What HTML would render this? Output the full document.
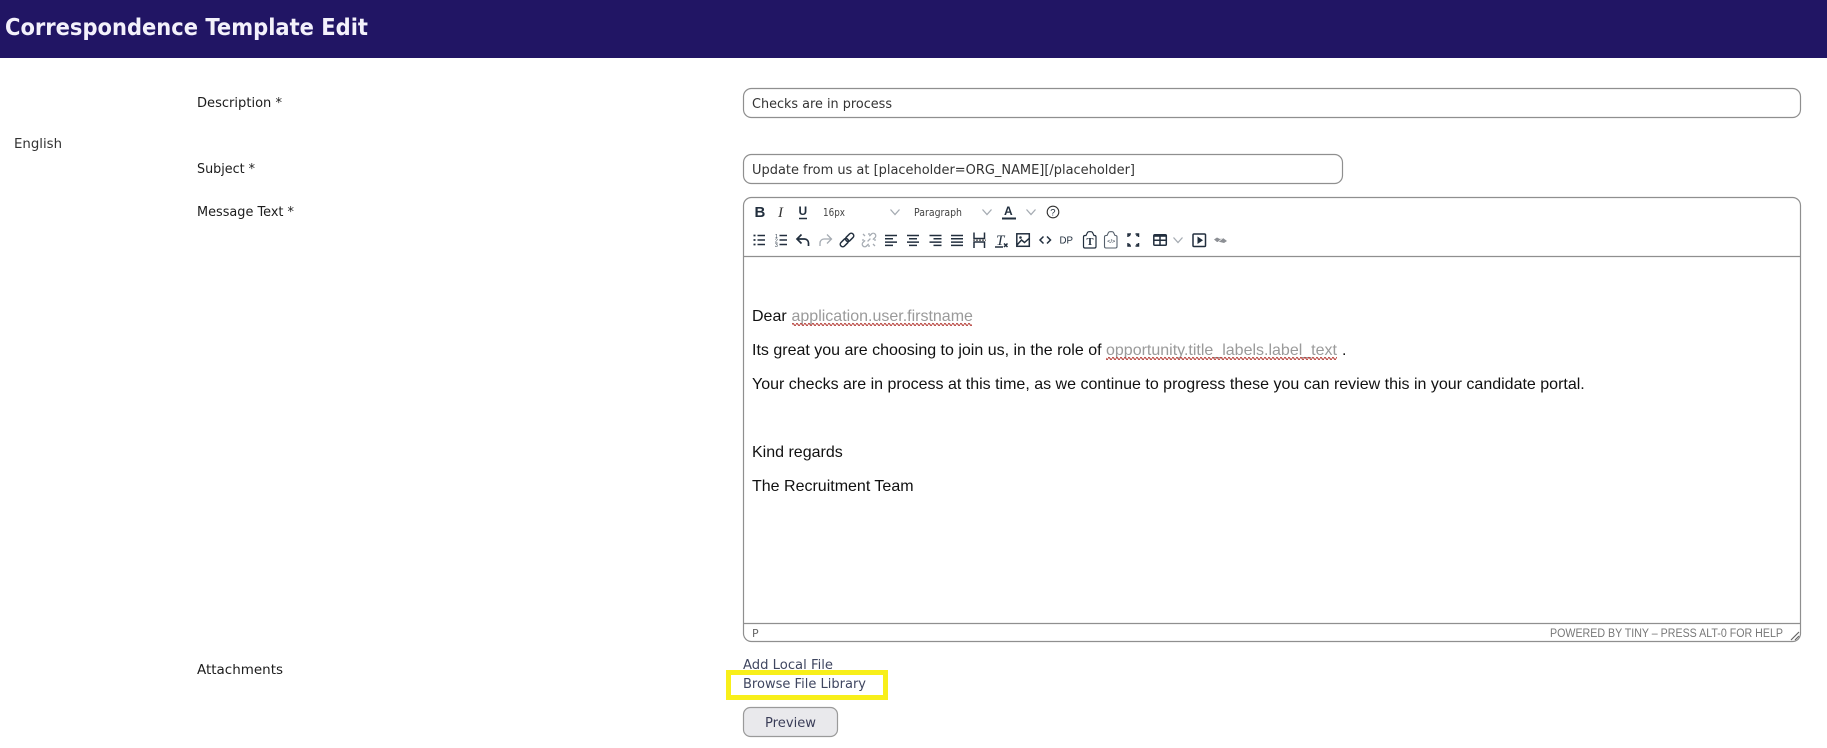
<!DOCTYPE html>
<html><head><meta charset="utf-8"><title>Correspondence Template Edit</title>
<style>
html,body{margin:0;padding:0;background:#fff;width:1827px;height:748px;overflow:hidden}
svg{display:block}
.m{font-family:"DejaVu Sans",sans-serif}
.a{font-family:"Liberation Sans",Arial,sans-serif;font-size:16px;fill:#111}
.g{fill:#9a9a9a}
.i{fill:none;stroke:#222f3e;stroke-width:1.5}
.l{fill:none;stroke:#a5abb2;stroke-width:1.3}
</style></head><body>
<svg width="1827" height="748" viewBox="0 0 1827 748" xmlns="http://www.w3.org/2000/svg">
<defs>
<pattern id="w" width="4" height="4" patternUnits="userSpaceOnUse" x="0" y="322"><path d="M0 1.500 Q1 -.5 2 1.500 T4 1.500" transform="translate(0 1)" fill="none" stroke="#b8453f" stroke-width="1.200"/></pattern>
<pattern id="w2" width="4" height="4" patternUnits="userSpaceOnUse" x="0" y="356"><path d="M0 1.500 Q1 -.5 2 1.500 T4 1.500" transform="translate(0 1)" fill="none" stroke="#b8453f" stroke-width="1.200"/></pattern>
</defs>
<rect width="1827" height="58" fill="#211564"/>
<text class="m" x="5" y="35" font-size="23" font-weight="700" fill="#f3f1fb" textLength="363" lengthAdjust="spacingAndGlyphs">Correspondence Template Edit</text>

<rect x="743.500" y="88.500" width="1057" height="29" rx="8" fill="#fff" stroke="#8f8f8f" stroke-width="1.200"/>
<rect x="743.500" y="154.500" width="599" height="29" rx="8" fill="#fff" stroke="#8f8f8f" stroke-width="1.200"/>
<rect x="743.500" y="197.500" width="1057" height="444" rx="8" fill="#fff" stroke="#8f8f8f" stroke-width="1.200"/>
<path d="M743.500 256.500H1800.500M743.500 623.500H1800.500" stroke="#8f8f8f" stroke-width="1.200"/>

<g class="m" font-size="13" fill="#1c1c1c">
<text x="197" y="107" textLength="85" lengthAdjust="spacingAndGlyphs">Description *</text>
<text x="14" y="148" textLength="48" lengthAdjust="spacingAndGlyphs" fill="#333">English</text>
<text x="197" y="173" textLength="58" lengthAdjust="spacingAndGlyphs">Subject *</text>
<text x="197" y="216" textLength="97" lengthAdjust="spacingAndGlyphs">Message Text *</text>
<text x="197" y="674" textLength="86" lengthAdjust="spacingAndGlyphs">Attachments</text>
<text x="752" y="108" textLength="140" lengthAdjust="spacingAndGlyphs" fill="#333">Checks are in process</text>
<text x="752" y="174" textLength="383" lengthAdjust="spacingAndGlyphs" fill="#333">Update from us at [placeholder=ORG_NAME][/placeholder]</text>
</g>

<!-- toolbar row 1 -->
<text x="754.500" y="217" font-family="Liberation Sans,sans-serif" font-weight="700" font-size="15" fill="#222f3e">B</text>
<text x="778" y="217" font-family="Liberation Serif,serif" font-style="italic" font-size="15" fill="#333">I</text>
<text x="798.500" y="215" font-family="Liberation Sans,sans-serif" font-size="12" font-weight="700" fill="#222f3e">U</text>
<path d="M799 218.500H807" class="i"/>
<text class="m" x="823" y="216" font-size="11" fill="#444" textLength="22" lengthAdjust="spacingAndGlyphs">16px</text>
<path d="M890.500 209.500l4.500 5 4.500-5" class="l"/>
<text class="m" x="914" y="216" font-size="11" fill="#444" textLength="48" lengthAdjust="spacingAndGlyphs">Paragraph</text>
<path d="M982.500 209.500l4.500 5 4.500-5" class="l"/>
<text x="1004" y="215" font-family="Liberation Sans,sans-serif" font-weight="700" font-size="12" fill="#222f3e">A</text>
<path d="M1002 218.500H1016" stroke="#222f3e" stroke-width="2"/>
<path d="M1026.500 209.500l4.500 5 4.500-5" class="l"/>
<circle cx="1053" cy="212" r="5.800" fill="none" stroke="#333" stroke-width="1.100"/>
<text x="1050.300" y="215.500" font-family="Liberation Sans,sans-serif" font-size="9.500" fill="#222f3e">?</text>

<!-- toolbar row 2 -->
<path d="M757.500 235.500H765M757.500 240H765M757.500 244.500H765" class="i"/>
<path d="M753.500 235.500h2M753.500 240h2M753.500 244.500h2" stroke="#222f3e" stroke-width="1.800" fill="none"/>
<path d="M779.500 235.500H787M779.500 240H787M779.500 244.500H787" class="i"/>
<text x="775" y="238" font-family="Liberation Sans,sans-serif" font-size="5" fill="#222f3e">1</text>
<text x="775" y="242.500" font-family="Liberation Sans,sans-serif" font-size="5" fill="#222f3e">2</text>
<text x="775" y="247" font-family="Liberation Sans,sans-serif" font-size="5" fill="#222f3e">3</text>
<path d="M801.500 234.500L797 239l4.500 4.500M797 239h7.500a4 4 0 0 1 4 4v3" fill="none" stroke="#222f3e" stroke-width="1.700"/>
<path d="M827 234.500l4.500 4.500-4.500 4.500M831.500 239H824a4 4 0 0 0-4 4v3" class="l"/>
<g class="i" transform="rotate(-45 847 240)"><rect x="838.500" y="237.500" width="9.500" height="5" rx="2.500"/><rect x="846" y="237.500" width="9.500" height="5" rx="2.500"/></g>
<g class="l" transform="rotate(-45 869 240)"><path d="M866 237.500h-3a2.500 2.500 0 0 0 0 5h3M872 237.500h3a2.500 2.500 0 0 1 0 5h-3M867 240h4"/></g>
<path d="M863 234l2 2M875 246l-2-2M862 240h2M874 240h2M869 233v2M869 245v2" class="l" stroke-width="1"/>
<path d="M885 235.500H897M885 238.800H893M885 242.100H897M885 245.400H893" class="i" stroke-width="1.600"/>
<path d="M907 235.500H919M909 238.800H917M907 242.100H919M909 245.400H917" class="i" stroke-width="1.600"/>
<path d="M929.500 235.500H941.500M933.500 238.800H941.500M929.500 242.100H941.500M933.500 245.400H941.500" class="i" stroke-width="1.600"/>
<path d="M951 235.500H963M951 238.800H963M951 242.100H963M951 245.400H963" class="i" stroke-width="1.600"/>
<path d="M974 232.500v6h10.500v-6M974 248v-6h10.500v6" class="i"/>
<path d="M973 240.200H986" stroke="#777" stroke-width="1.500" stroke-dasharray="2 1"/>
<text x="996" y="245" font-family="Liberation Serif,serif" font-style="italic" font-size="15" fill="#222f3e">T</text>
<path d="M995 247H1003" class="i" stroke-width="1.200"/>
<path d="M1004 243.500l3.500 3.500M1007.500 243.500l-3.500 3.500" class="i" stroke-width="1.200"/>
<rect x="1016.800" y="233.800" width="12.500" height="12.500" class="i" stroke-width="1.700"/>
<path d="M1017 245l4.500-5 3 2.500 4.500-4" class="i" stroke-width="1.300"/>
<circle cx="1020.500" cy="237.500" r="1.300" fill="#222f3e"/>
<path d="M1043.500 236.500l-3.500 3.500 3.500 3.500M1047 236.500l3.500 3.500-3.500 3.500" class="i"/>
<text x="1059.500" y="243.500" font-family="Liberation Sans,sans-serif" font-size="10.500" fill="#222f3e" textLength="13.500" lengthAdjust="spacingAndGlyphs">DP</text>
<path d="M1086 235.500l1.500-3q.5-.8 1.500-.8h2q1 0 1.500.8l1.500 3h.5q1.500 0 1.500 1.500v9.500q0 1.500-1.500 1.500h-9.500q-1.500 0-1.500-1.500v-9.500q0-1.500 1.500-1.500z" fill="none" stroke="#222f3e" stroke-width="1.200"/>
<text x="1086.500" y="245" font-family="Liberation Serif,serif" font-size="10.500" font-weight="700" fill="#222f3e">T</text>
<path d="M1107 235.500l1.500-3q.5-.8 1.500-.8h2q1 0 1.500.8l1.500 3h.5q1.500 0 1.500 1.500v9.500q0 1.500-1.500 1.500h-9.500q-1.500 0-1.500-1.500v-9.500q0-1.500 1.500-1.500z" fill="none" stroke="#555f6b" stroke-width="1.100"/>
<text x="1107.300" y="243" font-family="Liberation Sans,sans-serif" font-size="5.500" fill="#222f3e">&lt;/&gt;</text>
<path d="M1128 237v-3h3M1138.500 237v-3h-3M1128 243v3h3M1138.500 243v3h-3" class="i" stroke-width="1.400"/>
<path d="M1130 236l-1.500-1.500M1136.500 236l1.500-1.500M1130 244l-1.500 1.500M1136.500 244l1.500 1.500" class="i" stroke-width="1"/>
<rect x="1153.800" y="234.800" width="12.500" height="10.500" rx="1" class="i" stroke-width="1.500"/>
<path d="M1154 235.800H1166" stroke="#222f3e" stroke-width="2"/>
<path d="M1153.800 240.300H1166.300M1160 235V245" class="i" stroke-width="1.400"/>
<path d="M1173.500 237.500l4.500 5 4.500-5" class="l"/>
<rect x="1193" y="234" width="12.500" height="12.500" rx="1" class="i" stroke-width="1.700"/>
<path d="M1197.500 236.500v7.500l5.500-3.700z" fill="#222f3e"/>
<path d="M1214 239.500l3-2 3 1.500 3-1 4 3-3 2-4-1-3 0z" fill="#8c8f94"/>
<path d="M1217 243l7-6" stroke="#fff" stroke-width=".8"/>

<!-- editor body -->
<text class="a" x="752" y="321">Dear</text>
<text class="a g" x="791.500" y="321">application.user.firstname</text>
<rect x="792" y="322" width="180" height="4" fill="url(#w)"/>
<text class="a" x="752" y="355">Its great you are choosing to join us, in the role of</text>
<text class="a g" x="1106" y="355">opportunity.title_labels.label_text</text>
<rect x="1106" y="356" width="231" height="4" fill="url(#w2)"/>
<text class="a" x="1342" y="355">.</text>
<text class="a" x="752" y="389">Your checks are in process at this time, as we continue to progress these you can review this in your candidate portal.</text>
<text class="a" x="752" y="457">Kind regards</text>
<text class="a" x="752" y="491">The Recruitment Team</text>

<!-- status bar -->
<text class="m" x="752" y="637" font-size="11" fill="#666">P</text>
<text x="1550" y="637" font-family="Liberation Sans,sans-serif" font-size="11.500" fill="#777" textLength="233" lengthAdjust="spacingAndGlyphs">POWERED BY TINY – PRESS ALT-0 FOR HELP</text>
<path d="M1791 640l8-8M1795 640l4-4" stroke="#666" stroke-width="1.200" fill="none"/>

<!-- attachments -->
<text class="m" x="743" y="669" font-size="13" fill="#3f4660" textLength="90" lengthAdjust="spacingAndGlyphs">Add Local File</text>
<rect x="728.500" y="672.500" width="157" height="25" fill="#fff" stroke="#f8ef1a" stroke-width="5"/>
<text class="m" x="743" y="688" font-size="13" fill="#3f4660" textLength="123" lengthAdjust="spacingAndGlyphs">Browse File Library</text>
<rect x="743.500" y="707.500" width="94" height="29" rx="7" fill="#e9e9ec" stroke="#9a9a9a" stroke-width="1.200"/>
<text class="m" x="765" y="727" font-size="13.500" fill="#3a3d58" textLength="51" lengthAdjust="spacingAndGlyphs">Preview</text>
</svg>
</body></html>
